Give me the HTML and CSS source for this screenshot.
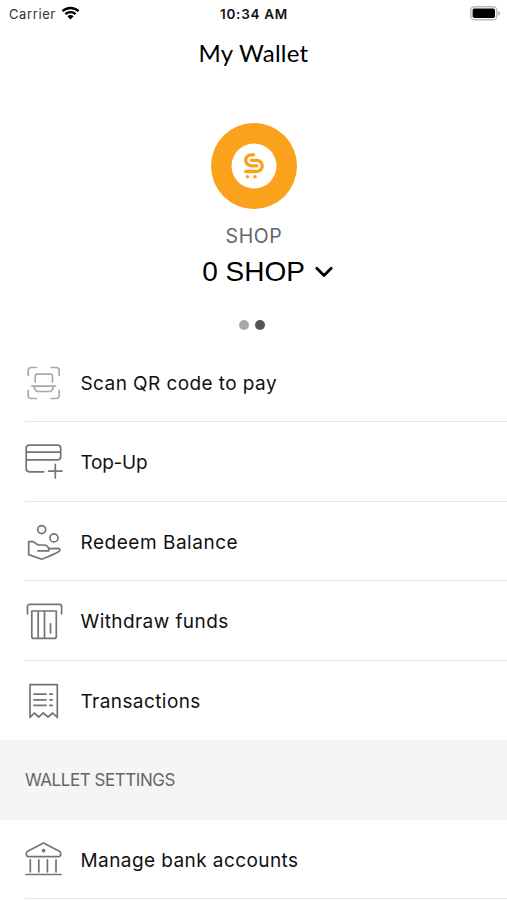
FILE: index.html
```
<!DOCTYPE html>
<html lang="en">
<head>
    <meta charset="UTF-8">
    <meta name="viewport" content="width=device-width, initial-scale=1.0">
    <title>My Wallet</title>
    <link rel="stylesheet" href="styles.css">
</head>
<body>
    <div class="status-bar">
        <div class="carrier">
            <span>Carrier</span>
            <svg class="wifi" viewBox="0 0 18 14">
                <path d="M1 5.2a11.5 11.5 0 0 1 16 0M3.9 8.2a7.3 7.3 0 0 1 10.2 0" />
                <path class="solid" d="M9 13.4L5.9 10.3a4.4 4.4 0 0 1 6.2 0z" />
            </svg>
        </div>
        <div class="time">10:34 AM</div>
        <div class="battery-wrap">
            <svg class="battery" viewBox="0 0 31 15">
                <rect x=".8" y=".8" width="26" height="13" rx="3.6" fill="#fff" stroke="#bbb" stroke-width="1.5" />
                <rect x="2.6" y="2.6" width="22.4" height="9.4" rx="1.8" />
                <path d="M28.4 5c2.2.8 2.2 3.8 0 4.6z" fill="#aaa" />
            </svg>
        </div>
    </div>
    <header>
        <h1>My Wallet</h1>
    </header>
    <section class="wallet">
        <svg class="coin" viewBox="0 0 86 86">
            <circle cx="43" cy="43" r="43" fill="#faa21b" />
            <circle cx="43" cy="43" r="22.5" fill="#fff" />
            <g fill="none" stroke="#faa21b" stroke-width="3.3" stroke-linecap="round" stroke-linejoin="round">
                <path d="M42.7 31.8h-2.5a5.5 5.5 0 0 0 0 11h5.6" />
                <path d="M40.4 37.3h5.2a5.6 5.6 0 0 1 0 11.2H34.8" />
            </g>
            <circle cx="36.4" cy="53.8" r="1.8" fill="#faa21b" />
            <circle cx="44" cy="53.8" r="1.8" fill="#faa21b" />
        </svg>
        <div class="currency">SHOP</div>
        <div class="balance">
            <span>0 SHOP</span>
            <svg class="chevron" viewBox="0 0 18 12"><path d="M1.8 2.2L9 9.4l7.2-7.2" /></svg>
        </div>
        <div class="dots">
            <span class="dot"></span>
            <span class="dot active"></span>
        </div>
    </section>
    <ul class="menu">
        <li class="item">
            <svg class="icon light" viewBox="0 0 40 40">
                <path d="M4.2 13.5V8.2a2.7 2.7 0 0 1 2.7-2.7h5.5M27 5.5h5.5a2.7 2.7 0 0 1 2.7 2.7v5.3M35.2 28.5v5.3a2.7 2.7 0 0 1-2.7 2.7H27M12.4 36.5H6.9a2.7 2.7 0 0 1-2.7-2.7v-5.3" />
                <path d="M11.2 20v-5.8a2 2 0 0 1 2-2h13.3a2 2 0 0 1 2 2V20M8 24.2h23.4M10.6 24.5v2.2l2.3 2.8h13.8l2.3-2.8v-2.2" />
            </svg>
            <span class="label">Scan QR code to pay</span>
        </li>
        <li class="item">
            <svg class="icon" viewBox="0 0 40 40">
                <path d="M2.2 18.8V7.1a3 3 0 0 1 3-3h28.5a3 3 0 0 1 3 3v8.7a3 3 0 0 1-3 3H2.2v9a3 3 0 0 0 3 3h14.6M2.2 11.2h34.5" />
                <path d="M31.3 23.4v13.4M24.6 30.1H38" />
            </svg>
            <span class="label tight">Top-Up</span>
        </li>
        <li class="item">
            <svg class="icon" viewBox="0 0 40 40">
                <circle cx="17.7" cy="8.6" r="4" />
                <circle cx="30" cy="16.9" r="4" />
                <path d="M4.7 20.6h4.4l5 3.4h5.4c2.6 0 4.5 1.5 5.2 3.6l9.3-.3c2.3 0 2.6 2.4.6 3.5-5.4 3-10.8 5.2-16.9 7.5L4.7 33.6zM14 29.9h10.7v-2.3" />
            </svg>
            <span class="label wide">Redeem Balance</span>
        </li>
        <li class="item">
            <svg class="icon" viewBox="0 0 40 40">
                <path d="M3.5 13.8V6.4a2 2 0 0 1 2-2h30.1a2 2 0 0 1 2 2v7.4" />
                <path d="M7.8 11h24.5v25.4a2 2 0 0 1-2 2H9.8a2 2 0 0 1-2-2zM14.2 11v27.4M20.5 11v27.4M26.5 23.8V33" />
            </svg>
            <span class="label">Withdraw funds</span>
        </li>
        <li class="item">
            <svg class="icon" viewBox="0 0 40 40">
                <path d="M6 37.4V4.6h27.3v32.8L28.7 33 24 37l-4.7-4-4.6 4-4.4-4z" />
                <path d="M10 14.2h12M10 19.8h12M10 25.4h12M25.8 14.2h2.5M25.8 19.8h2.5M25.8 25.4h2.5" />
            </svg>
            <span class="label">Transactions</span>
        </li>
    </ul>
    <h2 class="section-title">WALLET SETTINGS</h2>
    <ul class="menu settings">
        <li class="item">
            <svg class="icon" viewBox="0 0 40 40">
                <path d="M19.5 4L3.6 12.3c-1.8 1-2 5.3.6 5.3h30.6c2.6 0 2.4-4.3.6-5.3z" />
                <path d="M6.3 20.8v12M14.8 20.8v12M23.4 20.8v12M32 20.8v12M2 35.5h35" />
                <circle class="solid" cx="19.6" cy="11.6" r="1" />
            </svg>
            <span class="label">Manage bank accounts</span>
        </li>
    </ul>
</body>
</html>
```
FILE: styles.css
```
* {
    box-sizing: border-box;
}
body {
    font-family: Inter, "Liberation Sans", sans-serif;
    margin: 0;
    background: #fff;
    color: #111;
    height: 900px;
    overflow: hidden;
}
.status-bar {
    display: grid;
    grid-template-columns: 1fr auto 1fr;
    align-items: center;
    height: 28px;
    padding: 0 6px 0 9px;
    font-size: 13px;
}
.carrier {
    display: flex;
    align-items: center;
    gap: 5px;
    color: #333;
    letter-spacing: 0.6px;
}
.wifi {
    width: 19px;
    height: 14px;
    margin-top: -2px;
    fill: none;
    stroke: #000;
    stroke-width: 2.4;
}
.wifi .solid {
    fill: #000;
    stroke: none;
}
.time {
    font-size: 13.5px;
    font-weight: 600;
    letter-spacing: 0.7px;
    margin-right: 2px;
}
.battery-wrap {
    display: flex;
    justify-content: flex-end;
}
.battery {
    width: 31px;
    height: 15px;
    margin-top: -2px;
}
header {
    height: 52px;
    text-align: center;
}
header h1 {
    margin: 0;
    font-family: Lato, sans-serif;
    font-size: 24px;
    font-weight: 400;
    line-height: 50px;
    letter-spacing: 0.25px;
    color: #000;
}
.wallet {
    display: flex;
    flex-direction: column;
    align-items: center;
    height: 262.5px;
    padding-top: 43px;
}
.coin {
    width: 86px;
    height: 86px;
}
.currency {
    margin: 15px 0 0 1px;
    font-size: 19.5px;
    line-height: 24px;
    letter-spacing: 0.6px;
    color: #666;
}
.balance {
    display: flex;
    align-items: center;
    gap: 10px;
    margin: 6px 0 0 28px;
    font-family: "Liberation Sans", sans-serif;
    font-size: 28px;
    line-height: 36px;
    color: #000;
}
.chevron {
    width: 18px;
    height: 12px;
    fill: none;
    stroke: #000;
    stroke-width: 2.8;
    stroke-linecap: round;
    stroke-linejoin: round;
}
.dots {
    display: flex;
    gap: 6px;
    margin-top: 30px;
    margin-left: -3px;
}
.dot {
    width: 10px;
    height: 10px;
    border-radius: 50%;
    background: #aaa;
}
.dot.active {
    background: #555;
}
.menu {
    list-style: none;
    margin: 0;
    padding: 0 0 0 25px;
}
.item {
    display: flex;
    align-items: center;
    height: 79.5px;
    border-bottom: 1px solid #e6e6e6;
}
.item:last-child {
    border-bottom-color: transparent;
}
.settings .item {
    height: 79px;
    border-bottom-color: #e6e6e6;
}
.icon {
    width: 40px;
    height: 40px;
    margin: 0 16.5px 0 -1px;
    fill: none;
    stroke: #747474;
    stroke-width: 1.7;
    stroke-linecap: round;
    stroke-linejoin: round;
}
.icon.light {
    stroke: #a9a9a9;
}
.icon .solid {
    fill: #747474;
}
.label {
    padding-top: 4px;
    font-size: 19px;
    line-height: 24px;
    letter-spacing: 0.42px;
    white-space: nowrap;
}
.label.wide {
    letter-spacing: 0.52px;
}
.label.tight {
    letter-spacing: -0.25px;
}
.section-title {
    display: flex;
    align-items: center;
    height: 80px;
    margin: 0;
    padding-left: 25px;
    background: #f5f5f5;
    font-size: 17px;
    font-weight: 400;
    letter-spacing: -0.45px;
    color: #666;
}
```
